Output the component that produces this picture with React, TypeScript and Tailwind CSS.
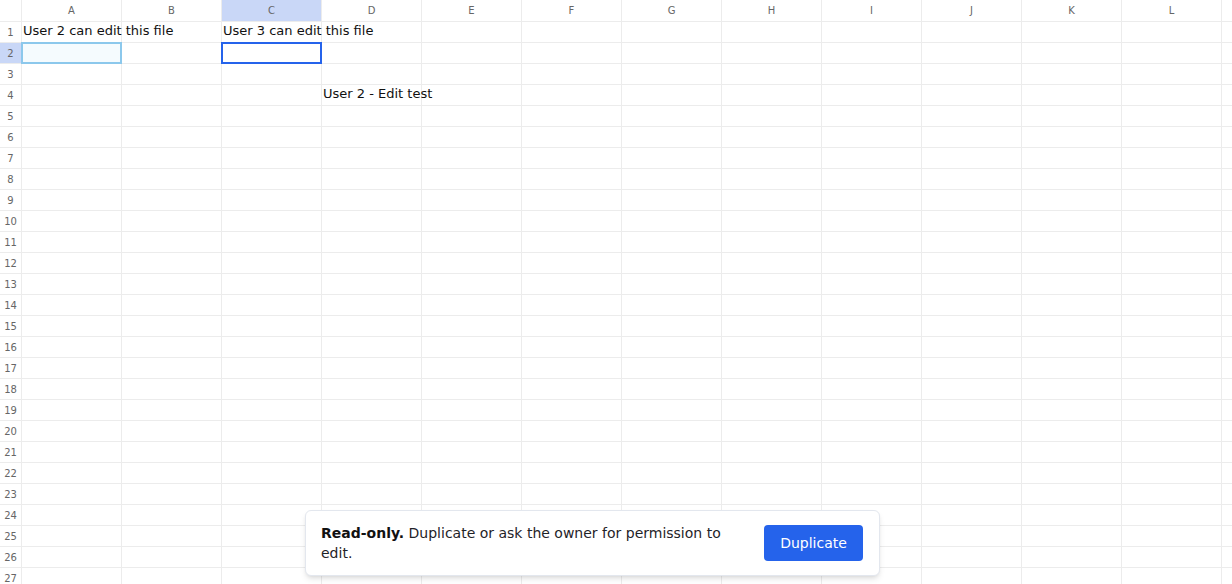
import React from 'react'

const columns = ['A', 'B', 'C', 'D', 'E', 'F', 'G', 'H', 'I', 'J', 'K', 'L', '']
const rows = Array.from({ length: 27 }, (_, i) => i + 1)

// cell contents keyed by "col-row"
const values: Record<string, string> = {
  'A-1': 'User 2 can edit this file',
  'C-1': 'User 3 can edit this file',
  'D-4': 'User 2 - Edit test',
}

function Cell({ col, row }: { col: string; row: number }) {
  const value = values[`${col}-${row}`]
  const isActive = col === 'C' && row === 2
  const isPeer = col === 'A' && row === 2
  return (
    <div className="relative w-[100px] h-[21px] shrink-0 border-r border-b border-[#ececec]">
      {value && (
        <span className="absolute left-[1px] -top-[2px] h-[21px] leading-[21px] whitespace-nowrap text-[13px] text-[#111] z-10">
          {value}
        </span>
      )}
      {isPeer && (
        <div className="absolute -left-px -top-px w-[101px] h-[22px] border-2 border-[#8cc8ec] bg-[#f5fbfe]" />
      )}
      {isActive && (
        <div className="absolute -left-px -top-px w-[101px] h-[22px] border-2 border-[#2563eb] z-20" />
      )}
    </div>
  )
}

export default function App() {
  return (
    <div className="relative w-[1232px] h-[584px] overflow-hidden bg-white font-['DejaVu_Sans',sans-serif]">
      {/* Column headers */}
      <div className="flex h-[22px]">
        <div className="w-[22px] h-[22px] shrink-0 border-r border-b border-[#ececec]" />
        {columns.map((c) => (
          <div
            key={c || 'extra'}
            className={`w-[100px] h-[22px] shrink-0 border-r border-b border-[#ececec] flex items-center justify-center text-[10px] text-[#666] ${
              c === 'C' ? 'bg-[#c9d7f7]' : 'bg-white'
            }`}
          >
            {c}
          </div>
        ))}
      </div>

      {/* Rows */}
      {rows.map((r) => (
        <div key={r} className="flex h-[21px]">
          <div
            className={`w-[22px] h-[21px] shrink-0 border-r border-b border-[#ececec] flex items-center justify-center text-[10px] text-[#666] ${
              r === 2 ? 'bg-[#c9d7f7]' : 'bg-white'
            }`}
          >
            {r}
          </div>
          {columns.map((c) => (
            <Cell key={c || 'extra'} col={c} row={r} />
          ))}
        </div>
      ))}

      {/* Read-only toast */}
      <div className="absolute left-[305px] top-[510px] w-[575px] h-[66px] flex items-center gap-4 pl-[15px] pr-4 bg-white border border-[#e3e7ee] rounded-md shadow-md z-30">
        <p className="flex-1 text-[14px] leading-[20px] text-[#1f2328]">
          <span className="font-bold text-[#111]">Read-only.</span> Duplicate or ask the owner for permission to edit.
        </p>
        <button className="shrink-0 w-[99px] h-[36px] rounded-[4px] bg-[#2563eb] text-white text-[14px]">
          Duplicate
        </button>
      </div>
    </div>
  )
}
